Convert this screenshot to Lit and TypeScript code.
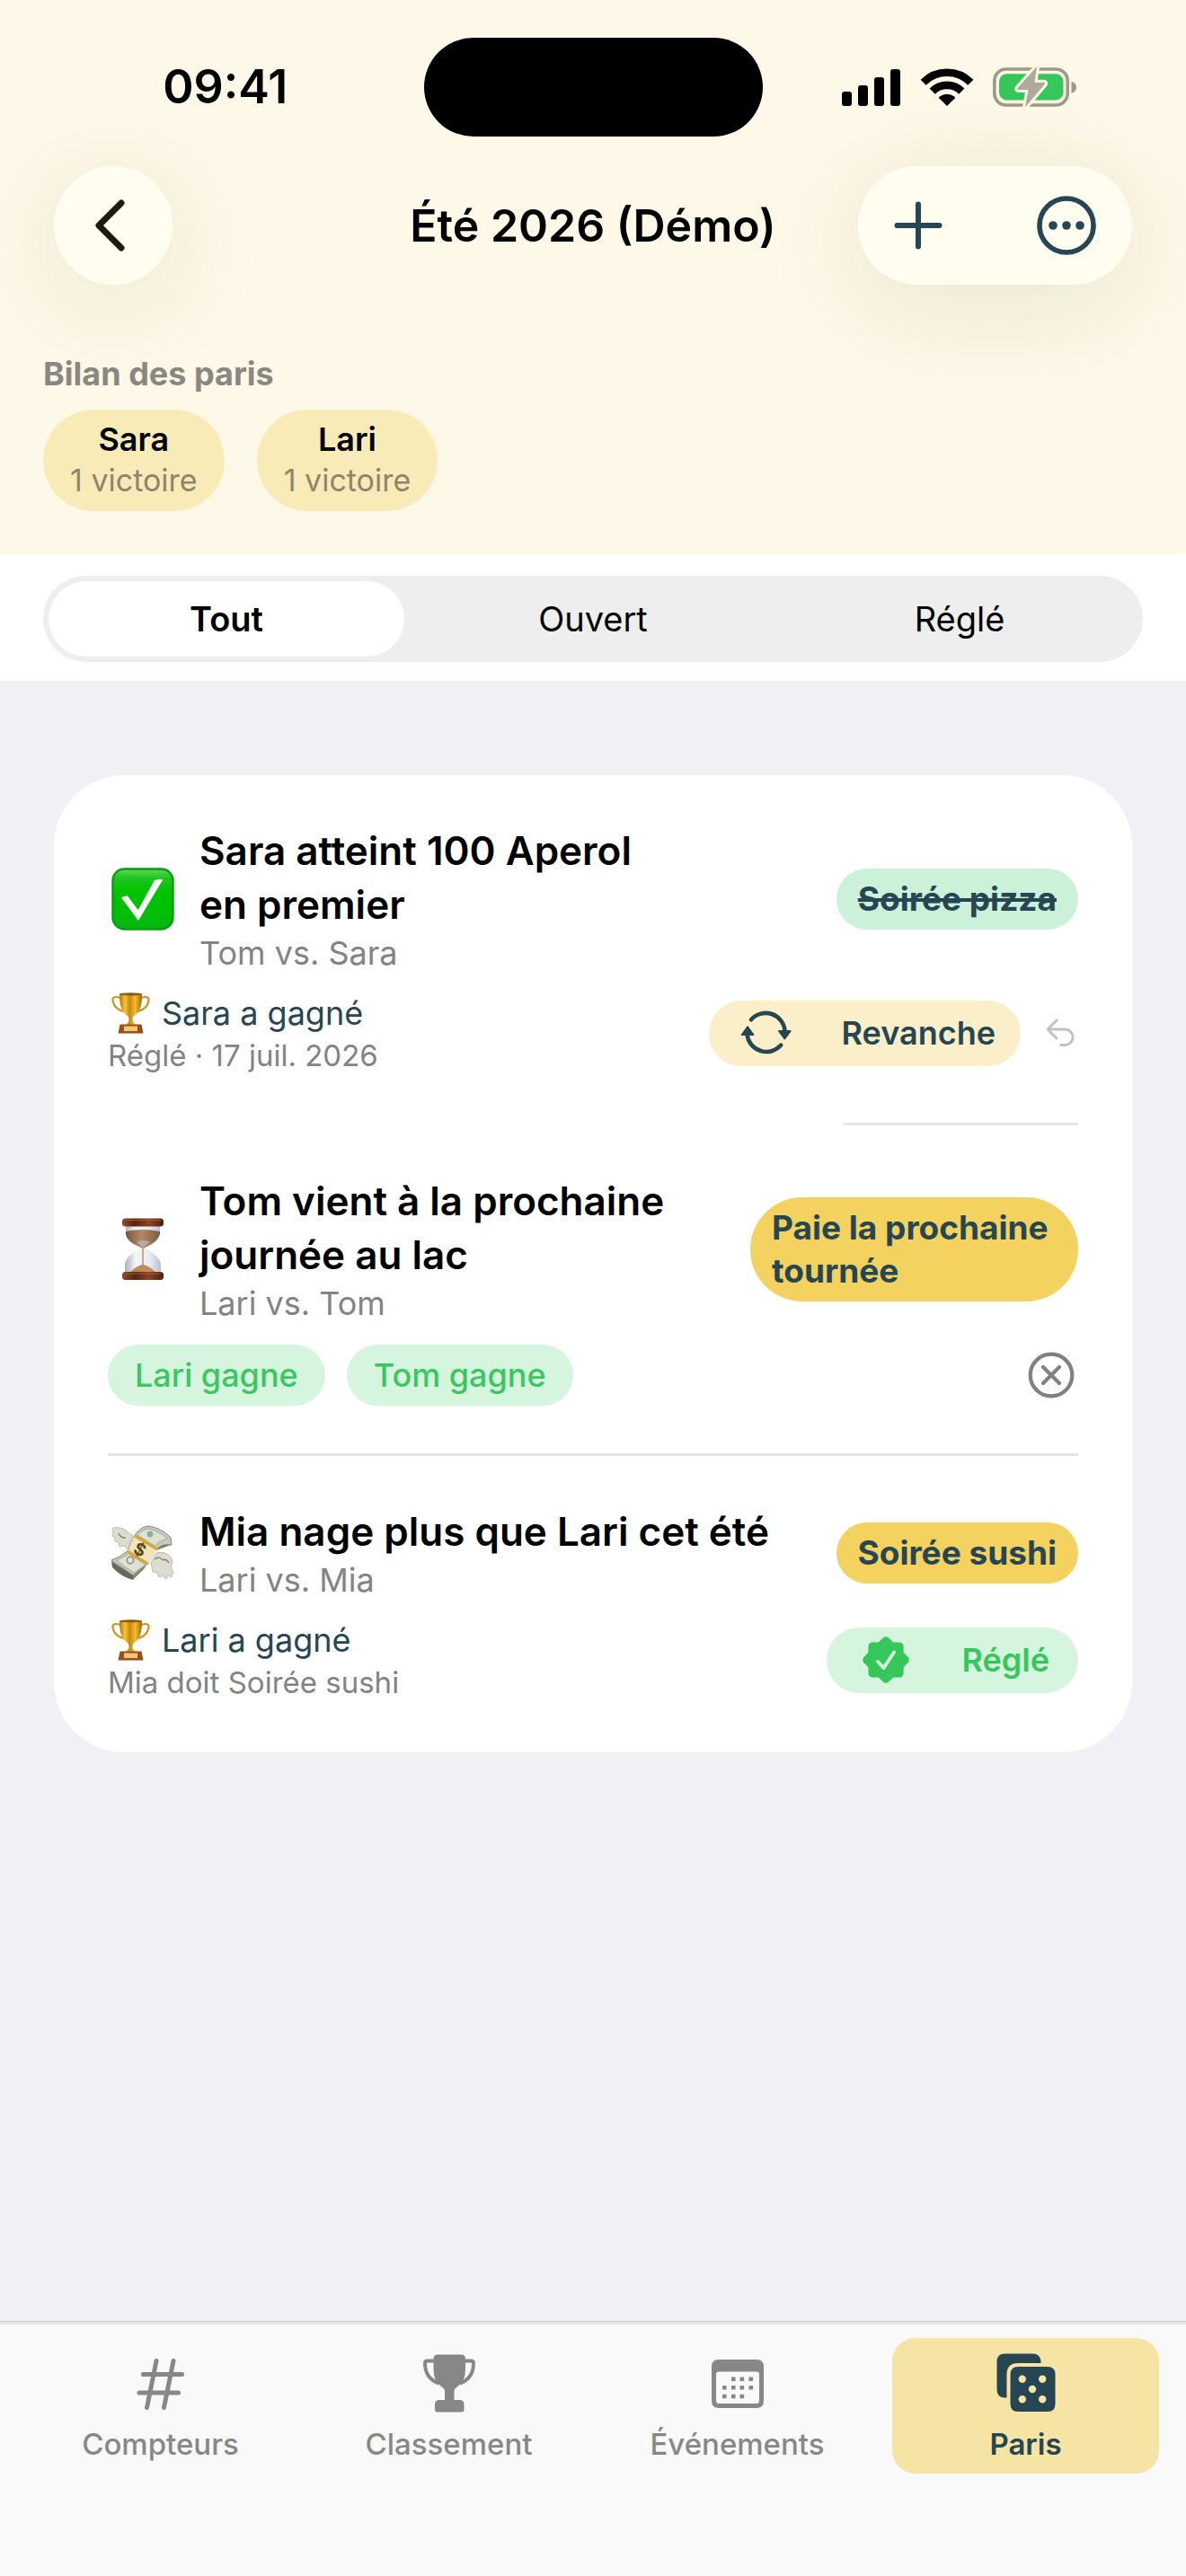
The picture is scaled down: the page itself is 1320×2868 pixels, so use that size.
import { LitElement, html, css, nothing } from "lit";
import { customElement, state } from "lit/decorators.js";
import { classMap } from "lit/directives/class-map.js";

type Filter = "all" | "open" | "settled";
type BetState = "settled" | "open" | "won";

interface Bet {
  state: BetState;
  title: string;
  players: [string, string];
  stake: string;
  winner?: string;
  note?: string;
}

const BETS: Bet[] = [
  {
    state: "settled",
    title: "Sara atteint 100 Aperol\nen premier",
    players: ["Tom", "Sara"],
    stake: "Soirée pizza",
    winner: "Sara",
    note: "Réglé · 17 juil. 2026",
  },
  {
    state: "open",
    title: "Tom vient à la prochaine\njournée au lac",
    players: ["Lari", "Tom"],
    stake: "Paie la prochaine tournée",
  },
  {
    state: "won",
    title: "Mia nage plus que Lari cet été",
    players: ["Lari", "Mia"],
    stake: "Soirée sushi",
    winner: "Lari",
    note: "Mia doit Soirée sushi",
  },
];

const FILTERS: { id: Filter; label: string }[] = [
  { id: "all", label: "Tout" },
  { id: "open", label: "Ouvert" },
  { id: "settled", label: "Réglé" },
];

const cellular = html`<svg width="66" height="42" viewBox="0 0 66 42" aria-hidden="true">
  <rect x="0" y="26" width="11" height="16" rx="3" />
  <rect x="18" y="19" width="11" height="23" rx="3" />
  <rect x="36" y="10" width="11" height="32" rx="3" />
  <rect x="54" y="1" width="11" height="41" rx="3" />
</svg>`;

const wifi = html`<svg width="58" height="42" viewBox="0 0 58 42" aria-hidden="true">
  <g fill="none" stroke="#000">
    <path d="M2.7 15.7A37.2 37.2 0 0 1 55.3 15.7" stroke-width="8.6" />
    <path d="M12.7 25.7A23 23 0 0 1 45.3 25.7" stroke-width="8.8" />
  </g>
  <path d="M29 42L20.2 33.2Q19.8 32.4 20.8 31.6A13.5 13.5 0 0 1 37.2 31.6Q38.2 32.4 37.8 33.2Z" />
</svg>`;

const battery = html`<svg width="94" height="48" viewBox="0 0 94 48" aria-hidden="true">
  <rect x="1.8" y="4" width="81.4" height="40" rx="13" fill="none" stroke="#9d998b" stroke-width="3.6" />
  <path d="M87.5 17.5Q93 19.5 93 24.2T87.5 31Z" fill="#9d998b" />
  <rect x="7" y="9.2" width="71.5" height="29.4" rx="8.5" fill="#35c759" />
  <path d="M49 1L46.5 18.7H57Q59 19 57.6 21L36 46.5L39.5 27H28.5Q26.5 26.6 27.8 24.8Z"
    fill="#fdf8e6" stroke="#fdf8e6" stroke-width="6" stroke-linejoin="round" />
  <path d="M49 1L46.5 18.7H57Q59 19 57.6 21L36 46.5L39.5 27H28.5Q26.5 26.6 27.8 24.8Z" fill="#aeaa9c" />
</svg>`;

const chevron = html`<svg width="40" height="60" viewBox="0 0 40 60" aria-hidden="true">
  <path d="M29 5L4 30L29 55" fill="none" stroke="#1e1a0c" stroke-width="7" stroke-linecap="round" stroke-linejoin="round" />
</svg>`;

const plus = html`<svg width="54" height="54" viewBox="0 0 54 54" aria-hidden="true">
  <path d="M27 3.5V50.5M3.5 27H50.5" stroke="#264653" stroke-width="6" stroke-linecap="round" />
</svg>`;

const more = html`<svg width="66" height="66" viewBox="0 0 66 66" aria-hidden="true">
  <circle cx="33" cy="33" r="30" fill="none" stroke="#264653" stroke-width="5.6" />
  <g fill="#264653"><circle cx="18" cy="33" r="4.8" /><circle cx="33" cy="33" r="4.8" /><circle cx="48" cy="33" r="4.8" /></g>
</svg>`;

const cycle = html`<svg width="56" height="48" viewBox="0 0 56 48" aria-hidden="true">
  <g fill="none" stroke="#264653" stroke-width="4.6" stroke-linecap="round">
    <path d="M11 9.2A21.5 21.5 0 0 1 48.6 22" />
    <path d="M44.2 37.6A21.5 21.5 0 0 1 6.6 26" />
  </g>
  <g fill="#264653" stroke="#264653" stroke-width="2" stroke-linejoin="round">
    <path d="M42 22H54.6L48.3 30.4Z" /><path d="M.8 26H13.4L7.1 17.4Z" />
  </g>
</svg>`;

const undo = html`<svg width="32" height="32" viewBox="0 0 32 32" aria-hidden="true">
  <path d="M12 2L2 12L12 22M2 12H21.3A8.75 8.75 0 0 1 21.3 29.5H16.5"
    fill="none" stroke="#c2c2c2" stroke-width="3" stroke-linecap="round" stroke-linejoin="round" />
</svg>`;

const cancel = html`<svg width="52" height="52" viewBox="0 0 52 52" aria-hidden="true">
  <g fill="none" stroke="#818181" stroke-width="4.2" stroke-linecap="round">
    <circle cx="26" cy="26" r="23.3" /><path d="M17 17L35 35M35 17L17 35" />
  </g>
</svg>`;

const seal = html`<svg width="56" height="56" viewBox="-28 -28 56 56" aria-hidden="true">
  <g fill="#35c759">
    <rect x="-19.6" y="-19.6" width="39.2" height="39.2" rx="4.5" />
    <rect x="-19.6" y="-19.6" width="39.2" height="39.2" rx="4.5" transform="rotate(45)" />
  </g>
  <path d="M-9 2L-2.5 9L9 -8.5" fill="none" stroke="#d6f5df" stroke-width="4" stroke-linecap="round" stroke-linejoin="round" />
</svg>`;

const hash = html`<svg width="66" height="66" viewBox="0 0 66 66" aria-hidden="true">
  <path d="M28 8.5L17.5 60.5M47 8.5L36.5 60.5M13.5 23.5H56.5M9 44H52.5" fill="none" stroke="currentColor" stroke-width="5" stroke-linecap="round" />
</svg>`;

const cup = html`<svg width="66" height="66" viewBox="0 0 66 66" aria-hidden="true">
  <g fill="currentColor">
    <path d="M20 1.5H46.5Q51 1.5 51 6V18Q51 31 43 36.5Q38.5 39.5 38.5 42V52H28V42Q28 39.5 23.5 36.5Q15.5 31 15.5 18V6Q15.5 1.5 20 1.5Z" />
    <path d="M22 52H44.5Q49.5 52 49.5 57V62.5Q49.5 65.5 47 65.5H19.5Q17 65.5 17 62.5V57Q17 52 22 52Z" />
  </g>
  <path d="M17 8.5H8.5Q6 8.5 6 11Q6 28 21.5 33.5M49.5 8.5H57.5Q60 8.5 60 11Q60 28 45 33.5" fill="none" stroke="currentColor" stroke-width="4" />
</svg>`;

const calendar = html`<svg width="66" height="66" viewBox="0 0 66 66" aria-hidden="true">
  <path fill="currentColor" fill-rule="evenodd"
    d="M12 7H54Q62 7 62 15V53Q62 61 54 61H12Q4 61 4 53V15Q4 7 12 7ZM12 20.5Q9 20.5 9 23.5V52.5Q9 56 12.5 56H53.5Q57 56 57 52.5V23.5Q57 20.5 54 20.5Z" />
  <path fill="none" stroke="currentColor" stroke-width="4.6"
    d="M26 28.7h4.6M35.5 28.7h4.6M45.5 28.7h4.6M16 38.3h4.6M26 38.3h4.6M35.5 38.3h4.6M45.5 38.3h4.6M16 48h4.6M26 48h4.6M35.5 48h4.6" />
</svg>`;

const dice = html`<svg width="66" height="66" viewBox="0 0 66 66" aria-hidden="true">
  <path fill="currentColor" d="M9.5 .5H40.5Q49 .5 49.5 9V11H24Q11.5 11 11.5 23.5V49.5H9.5Q.5 49.5 .5 40.5V9.5Q.5 .5 9.5 .5Z" />
  <path fill="currentColor" fill-rule="evenodd"
    d="M24 15H57Q65.5 15 65.5 23.5V56.5Q65.5 65 57 65H24Q15.5 65 15.5 56.5V23.5Q15.5 15 24 15Z
       M24.6 28.7a4.2 4.2 0 1 0 8.4 0a4.2 4.2 0 1 0 -8.4 0Z
       M47 28.7a4.2 4.2 0 1 0 8.4 0a4.2 4.2 0 1 0 -8.4 0Z
       M35.8 40a4.2 4.2 0 1 0 8.4 0a4.2 4.2 0 1 0 -8.4 0Z
       M24.6 51.3a4.2 4.2 0 1 0 8.4 0a4.2 4.2 0 1 0 -8.4 0Z
       M47 51.3a4.2 4.2 0 1 0 8.4 0a4.2 4.2 0 1 0 -8.4 0Z" />
</svg>`;

const checkEmoji = html`<svg width="70" height="70" viewBox="0 0 70 70" role="img" aria-label="Réglé">
  <defs>
    <linearGradient id="ck" x1="0" y1="0" x2="0" y2="1">
      <stop offset="0" stop-color="#5fd65c" /><stop offset=".16" stop-color="#1cc51c" />
      <stop offset=".4" stop-color="#00c400" /><stop offset="1" stop-color="#06b80d" />
    </linearGradient>
  </defs>
  <rect x="1.5" y="1.5" width="67" height="67" rx="13" fill="url(#ck)" stroke="#0b9b14" stroke-width="2.4" />
  <path d="M11 33.5Q14 31 18 31.5L29.7 47L48 14Q52 12.5 57.5 13L30 59Z" fill="#fff" />
</svg>`;

const hourglassEmoji = html`<svg width="46" height="70" viewBox="0 0 46 70" role="img" aria-label="Ouvert">
  <defs>
    <linearGradient id="wood" x1="0" y1="0" x2="1" y2="0">
      <stop offset="0" stop-color="#8b4a2b" /><stop offset=".3" stop-color="#5a2411" />
      <stop offset=".65" stop-color="#8d4424" /><stop offset="1" stop-color="#4d1d0d" />
    </linearGradient>
    <linearGradient id="sand" x1="0" y1="0" x2="1" y2="0">
      <stop offset="0" stop-color="#76573f" /><stop offset=".45" stop-color="#b08a68" /><stop offset="1" stop-color="#7c5d45" />
    </linearGradient>
    <linearGradient id="glass" x1="0" y1="0" x2="1" y2="0">
      <stop offset="0" stop-color="#aab0b8" /><stop offset=".3" stop-color="#f4f7fb" />
      <stop offset=".7" stop-color="#e4eaf2" /><stop offset="1" stop-color="#b7c0cc" />
    </linearGradient>
  </defs>
  <path d="M4 9H42V18Q41 27 25.5 34Q42 42 43 52V61H3V52Q4 42 20.5 34Q5 27 4 18Z" fill="url(#glass)" />
  <path d="M4 15Q23 11 42 15V18Q40 26 27 32L23 34L19 32Q5 26 4 18Z" fill="url(#sand)" />
  <path d="M16 27Q23 23 31 27L23 33Z" fill="#c4bcb3" opacity=".7" />
  <path d="M22.3 33H23.7V52Q31 54 37 60H9Q15 54 22.3 52Z" fill="#b98f56" />
  <rect x="0" y=".5" width="46" height="9" rx="3.5" fill="url(#wood)" />
  <rect x="0" y="60" width="46" height="9" rx="3.5" fill="url(#wood)" />
  <path d="M3 2.5H43M3 62H43" stroke="#b56e45" stroke-width="1.2" opacity=".7" />
</svg>`;

const moneyEmoji = html`<svg width="70" height="62" viewBox="0 0 70 62" role="img" aria-label="Gagné">
  <g fill="#dedbd0" stroke="#b3afa2" stroke-width=".8" stroke-linejoin="round">
    <path d="M20 9Q12 1 2 3Q0 5 2 8L1 12L4 14L4 18L8 19L9 24L14 23L18 27L24 12Z" />
    <path d="M50 31Q60 28 67 37L68 43L66 46L69 52L67 58L63 56L61 60L57 56L53 58L51 53L46 52L44 42Z" />
  </g>
  <path d="M0 40Q10 47 24 55L24 61Q10 57 1 47Z" fill="#66675f" />
  <path d="M24 55L40 41L37 48L24 61Z" fill="#85867d" />
  <path d="M26 11Q33 1 42 1Q57 4 66 14L67 22Q57 20 50 27Q44 38 38 45L24 56Q12 47 0 39Q9 36 18 29Z" fill="#c6c8ba" stroke="#84867b" stroke-width="1" />
  <path d="M29 11Q36 4 42 4Q54 7 62 15Q54 17 48 23Z" fill="#dfe2d3" stroke="#999c8d" stroke-width=".8" />
  <path d="M6 39Q13 36 19 32L38 44L25 53Q15 47 6 39Z" fill="#dfe2d3" stroke="#999c8d" stroke-width=".8" />
  <circle cx="43" cy="10" r="3.4" fill="#8fae97" />
  <circle cx="21" cy="39" r="3.8" fill="none" stroke="#8d9184" stroke-width="1.6" />
  <path d="M58 22Q53 24 50 28L66 22Z" fill="#77786f" />
  <path d="M26 11L51 26L41 44L18 29Z" fill="#f1e5bd" />
  <path d="M26 12L51 27" stroke="#d9a52a" stroke-width="3.2" />
  <path d="M18 29L41 43.5" stroke="#d9a52a" stroke-width="3.2" />
  <text x="32" y="34" text-anchor="middle" font-family="Inter, sans-serif" font-size="19" font-weight="700" fill="#5d4514" transform="rotate(26 32 27)">$</text>
  <path d="M8 9Q11 15 16 14M48 38Q54 34 57 39Q61 37 64 42" fill="none" stroke="#77746a" stroke-width="1.2" />
</svg>`;

const trophyEmoji = html`<svg width="48" height="48" viewBox="0 0 48 48" role="img" aria-label="Trophée">
  <defs>
    <linearGradient id="gold" x1="0" y1="0" x2="1" y2="0">
      <stop offset="0" stop-color="#b87408" /><stop offset=".25" stop-color="#f6c53a" />
      <stop offset=".45" stop-color="#c98a10" /><stop offset=".7" stop-color="#f3bd2e" /><stop offset="1" stop-color="#a8640a" />
    </linearGradient>
  </defs>
  <path d="M14 7Q5 4 5.5 10Q7 19 17 22M37 7Q46 4 45.5 10Q44 19 34 22" fill="none" stroke="#cf941f" stroke-width="2.2" />
  <path d="M13 2.5H38Q38.5 22 29 27Q27.5 28 27.5 33L31 37H20L23.5 33Q23.5 28 22 27Q12.5 22 13 2.5Z" fill="url(#gold)" />
  <ellipse cx="25.5" cy="2.8" rx="12.5" ry="1.6" fill="#8f5a0c" />
  <path d="M13.5 36.5H37.5L39.5 46.5H11.5Z" fill="#9a4f17" />
  <rect x="18" y="38.5" width="15" height="5.5" fill="#f3c777" />
</svg>`;

const EMOJI = { settled: checkEmoji, open: hourglassEmoji, won: moneyEmoji };

const TABS = [
  { label: "Compteurs", href: "#compteurs", icon: hash },
  { label: "Classement", href: "#classement", icon: cup },
  { label: "Événements", href: "#evenements", icon: calendar },
  { label: "Paris", href: "#paris", icon: dice },
];

@customElement("app-root")
export class AppRoot extends LitElement {
  @state() private filter: Filter = "all";

  static styles = css`
    :host {
      display: flex;
      flex-direction: column;
      min-height: 100vh;
      background: #f1f0f5;
      color: #000;
      font-family: Inter, "Liberation Sans", sans-serif;
      font-size: 36px;
      line-height: 48px;
    }
    * { box-sizing: border-box; }
    svg { display: block; flex: none; overflow: visible; }
    h1, h2, h3, p, ul { margin: 0; padding: 0; font: inherit; }
    ul { list-style: none; }
    button {
      margin: 0;
      padding: 0;
      border: 0;
      background: none;
      color: inherit;
      font: inherit;
      cursor: pointer;
    }

    .top { padding-bottom: 48px; background: #fdf8e7; }
    .status {
      display: grid;
      grid-template-columns: 1fr 377px 1fr;
      align-items: center;
      padding-top: 42px;
    }
    .time {
      padding-left: 30px;
      text-align: center;
      font-size: 52px;
      font-weight: 600;
      line-height: 60px;
    }
    .island { height: 110px; border-radius: 55px; background: #000; }
    .signals {
      display: flex;
      align-items: center;
      justify-content: center;
      gap: 22px;
      padding-right: 32px;
    }
    .nav {
      display: grid;
      grid-template-columns: 1fr auto 1fr;
      align-items: center;
      padding: 33px 60px 0;
    }
    .nav-title { font-size: 50px; font-weight: 600; line-height: 60px; }
    .glass {
      display: flex;
      align-items: center;
      height: 132px;
      border-radius: 66px;
      background: #fffdf0;
      box-shadow: 0 20px 120px rgba(60, 65, 30, 0.1);
    }
    .back { justify-content: center; width: 132px; }
    .actions { justify-self: end; gap: 105px; padding: 0 40px; }
    .actions button { display: flex; }

    .recap { padding: 77px 48px 0; }
    .recap-title { color: #8a8780; font-weight: 700; line-height: 44px; }
    .people { display: flex; gap: 36px; margin-top: 18px; }
    .person {
      padding: 9px 30px 12px;
      border-radius: 57px;
      background: #f9ebb8;
      text-align: center;
    }
    .person-name { font-weight: 600; }
    .person-wins { color: #91846a; font-size: 34px; line-height: 44px; }

    .filters { padding: 24px 48px 21px; background: #fff; }
    .segments {
      display: grid;
      grid-template-columns: repeat(3, 1fr);
      border-radius: 48px;
      background: #eee;
    }
    .segment { height: 84px; margin: 6px; border-radius: 42px; font-size: 38px; }
    .segment.on { background: #fff; font-weight: 600; }

    .content { flex: 1; padding: 105px 60px; }
    .card { padding: 0 60px; border-radius: 78px; background: #fff; }
    .bet { padding: 54px 0 53px; border-bottom: 3px solid #e4e4e4; }
    .bet.short-rule {
      border-image: linear-gradient(to left, #e6e6e6 262px, transparent 262px) 1;
    }
    .bet:last-child { border-bottom-color: transparent; }
    .bet-head { display: flex; align-items: center; }
    .emoji { display: flex; justify-content: center; width: 78px; margin-right: 24px; }
    .bet-text { flex: 1; }
    .bet-title { font-size: 44px; font-weight: 600; line-height: 60px; white-space: pre-line; }
    .muted { color: #838383; }
    .stake {
      max-width: 365px;
      padding: 10px 24px;
      border-radius: 58px;
      background: #f3d25f;
      color: #264653;
      font-size: 37px;
      font-weight: 700;
    }
    .stake.paid { background: #ccf1d9; text-decoration: line-through; text-decoration-thickness: 4px; }
    .bet-foot { display: flex; align-items: center; justify-content: space-between; margin-top: 18px; }
    .winner { display: flex; align-items: center; gap: 12px; color: #264653; line-height: 50px; }
    .note { font-size: 33px; line-height: 44px; }
    .buttons { display: flex; align-items: center; gap: 28px; }
    .pill {
      display: flex;
      align-items: center;
      gap: 56px;
      height: 73px;
      padding: 0 28px 0 36px;
      border-radius: 37px;
      color: #264653;
      background: #faefc8;
      font-weight: 600;
    }
    .pill.green { padding: 0 32px 0 38px; background: #d6f5df; color: #34c759; }
    .undo, .cancel { display: flex; margin-right: 4px; }
    .bet-foot.choices { margin-top: 22px; }
    .choices .buttons { gap: 24px; }
    .pick {
      height: 68px;
      padding: 0 30px;
      border-radius: 34px;
      background: #d6f5df;
      color: #3bc75f;
      font-weight: 500;
    }

    .tabs {
      display: grid;
      grid-template-columns: repeat(4, 1fr);
      gap: 24px;
      padding: 18px 30px 114px;
      border-top: 1px solid #c8c8cb;
      background: #f8f9f8;
      box-shadow: inset 0 3px 0 #e3e4e3;
    }
    .tab {
      display: flex;
      flex-direction: column;
      align-items: center;
      gap: 15px;
      padding: 17px 0 13px;
      border-radius: 26px;
      color: #868886;
      font-size: 33px;
      font-weight: 500;
      line-height: 40px;
      text-decoration: none;
    }
    .tab.on { background: #f5e4a4; color: #264653; font-weight: 600; }
  `;

  private get visibleBets(): Bet[] {
    if (this.filter === "open") return BETS.filter((b) => b.state !== "settled");
    if (this.filter === "settled") return BETS.filter((b) => b.state === "settled");
    return BETS;
  }

  private renderFoot(bet: Bet) {
    if (bet.state === "open") {
      return html`<div class="bet-foot choices">
        <div class="buttons">
          ${bet.players.map((p) => html`<button class="pick">${p} gagne</button>`)}
        </div>
        <button class="cancel" aria-label="Annuler">${cancel}</button>
      </div>`;
    }
    const settled = bet.state === "settled";
    return html`<div class="bet-foot">
      <div>
        <p class="winner">${trophyEmoji}<span>${bet.winner} a gagné</span></p>
        <p class="note muted">${bet.note}</p>
      </div>
      <div class="buttons">
        <button class=${classMap({ pill: true, green: !settled })}>
          ${settled ? cycle : seal}<span>${settled ? "Revanche" : "Réglé"}</span>
        </button>
        ${settled ? html`<button class="undo" aria-label="Rouvrir">${undo}</button>` : nothing}
      </div>
    </div>`;
  }

  private renderBet(bet: Bet) {
    const settled = bet.state === "settled";
    return html`<li class=${classMap({ bet: true, "short-rule": settled })}>
      <div class="bet-head">
        <span class="emoji">${EMOJI[bet.state]}</span>
        <div class="bet-text">
          <h3 class="bet-title">${bet.title}</h3>
          <p class="muted">${bet.players[0]} vs. ${bet.players[1]}</p>
        </div>
        <span class=${classMap({ stake: true, paid: settled })}>${bet.stake}</span>
      </div>
      ${this.renderFoot(bet)}
    </li>`;
  }

  render() {
    return html`
      <header class="top">
        <div class="status">
          <span class="time">09:41</span>
          <span class="island"></span>
          <span class="signals">${cellular}${wifi}${battery}</span>
        </div>
        <div class="nav">
          <button class="glass back" aria-label="Retour">${chevron}</button>
          <h1 class="nav-title">Été 2026 (Démo)</h1>
          <div class="glass actions">
            <button aria-label="Ajouter">${plus}</button>
            <button aria-label="Plus">${more}</button>
          </div>
        </div>
        <section class="recap">
          <h2 class="recap-title">Bilan des paris</h2>
          <ul class="people">
            ${["Sara", "Lari"].map(
              (name) => html`<li class="person">
                <p class="person-name">${name}</p>
                <p class="person-wins">1 victoire</p>
              </li>`
            )}
          </ul>
        </section>
      </header>
      <div class="filters">
        <div class="segments">
          ${FILTERS.map(
            (f) => html`<button
              class=${classMap({ segment: true, on: this.filter === f.id })}
              aria-pressed=${this.filter === f.id ? "true" : "false"}
              @click=${() => (this.filter = f.id)}
            >${f.label}</button>`
          )}
        </div>
      </div>
      <main class="content">
        <ul class="card">${this.visibleBets.map((b) => this.renderBet(b))}</ul>
      </main>
      <nav class="tabs">
        ${TABS.map(
          (t) => html`<a class=${classMap({ tab: true, on: t.label === "Paris" })} href=${t.href}>
            ${t.icon}<span>${t.label}</span>
          </a>`
        )}
      </nav>
    `;
  }
}
